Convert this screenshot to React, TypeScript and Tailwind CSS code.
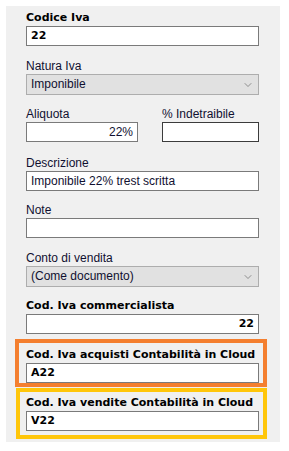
import { ChevronDown } from 'lucide-react';

function Label({ text, bold }: { text: string; bold?: boolean }) {
  return (
    <div
      className={
        'h-[16px] shrink-0 leading-[16px] whitespace-nowrap ' +
        (bold
          ? "font-bold text-black text-[11px] font-['DejaVu_Sans',Verdana,sans-serif]"
          : 'text-[#101030] text-[12px]')
      }
    >
      {text}
    </div>
  );
}

function TextBox({ value, bold, right, dark }: { value?: string; bold?: boolean; right?: boolean; dark?: boolean }) {
  return (
    <div
      className={
        'h-[20px] shrink-0 bg-white border leading-[18px] px-[4px] whitespace-nowrap overflow-hidden ' +
        (dark ? 'border-[#3c3c3c] ' : 'border-[#7a7a7a] ') +
        (bold
          ? "font-bold text-black text-[11px] font-['DejaVu_Sans',Verdana,sans-serif] "
          : 'text-[#101030] text-[12px] ') +
        (right ? 'text-right' : 'text-left')
      }
    >
      {value}
    </div>
  );
}

function Combo({ value }: { value: string }) {
  return (
    <div className="h-[21px] shrink-0 bg-[#e1e1e1] border border-[#adadad] flex items-center justify-between pl-[4px] pr-[4px] text-[12px] text-[#101030]">
      <span className="leading-[19px]">{value}</span>
      <ChevronDown className="w-[12px] h-[12px] text-[#555]" strokeWidth={1.2} />
    </div>
  );
}

export default function App() {
  return (
    <div className="bg-white w-[289px] h-[451px] p-[6px] font-['Liberation_Sans',Arial,sans-serif]">
      <div className="bg-[#f0f0f0] w-[274px] h-[436px] pl-[20px] pr-[21px] pt-[4px] flex flex-col">
        <Label text="Codice Iva" bold />
        <TextBox value="22" bold />

        <div className="mt-[12px] shrink-0">
          <Label text="Natura Iva" />
          <Combo value="Imponibile" />
        </div>

        <div className="mt-[11px] shrink-0 flex gap-[24px]">
          <div className="w-[112px]">
            <Label text="Aliquota" />
            <TextBox value="22%" right />
          </div>
          <div className="flex-1">
            <Label text="% Indetraibile" />
            <TextBox dark />
          </div>
        </div>

        <div className="mt-[13px] shrink-0">
          <Label text="Descrizione" />
          <TextBox value="Imponibile 22% trest scritta" />
        </div>

        <div className="mt-[11px] shrink-0">
          <Label text="Note" />
          <TextBox />
        </div>

        <div className="mt-[12px] shrink-0">
          <Label text="Conto di vendita" />
          <Combo value="(Come documento)" />
        </div>

        <div className="mt-[11px] shrink-0">
          <Label text="Cod. Iva commercialista" bold />
          <TextBox value="22" bold right />
        </div>

        <div className="mt-[5px] shrink-0 ml-[-11px] w-[252px] border-4 border-[#f47f2f] pl-[7px] pr-[4px] pt-[4px]">
          <Label text="Cod. Iva acquisti Contabilità in Cloud" bold />
          <TextBox value="A22" bold />
        </div>

        <div className="mt-[1px] shrink-0 ml-[-10px] w-[251px] border-4 border-[#ffc60a] pl-[6px] pr-[4px] pt-[3px] pb-[4px]">
          <Label text="Cod. Iva vendite Contabilità in Cloud" bold />
          <TextBox value="V22" bold />
        </div>
      </div>
    </div>
  );
}
